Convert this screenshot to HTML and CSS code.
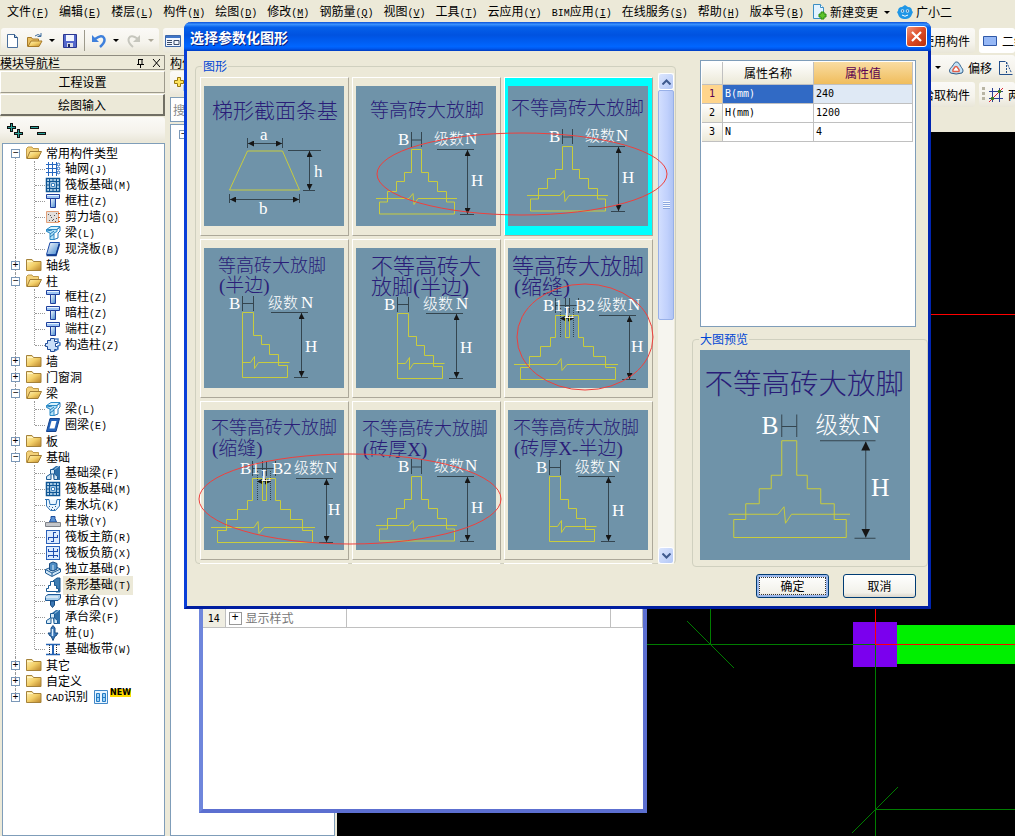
FILE: index.html
```html
<!DOCTYPE html>
<html lang="zh-CN">
<head>
<meta charset="utf-8">
<title>选择参数化图形</title>
<link rel="stylesheet" href="styles.css">
</head>
<body>
<svg class="defs" aria-hidden="true">
  <defs>
    <linearGradient id="gold" x1="0" y1="0" x2="1" y2="1"><stop offset="0" stop-color="#fff3b8"/><stop offset=".5" stop-color="#f3cf68"/><stop offset="1" stop-color="#b9832a"/></linearGradient>
    <linearGradient id="steel" x1="0" y1="0" x2="1" y2="1"><stop offset="0" stop-color="#fff"/><stop offset="1" stop-color="#3f86cf"/></linearGradient>
    <marker id="arr" viewBox="0 0 6 6" refX="6" refY="3" markerWidth="6" markerHeight="6" markerUnits="userSpaceOnUse" orient="auto-start-reverse"><path d="M0 0L6 3L0 6z" fill="#161616"/></marker>

    <symbol id="i-open" viewBox="0 0 16 16"><path d="M.5 13.500V3.500L2 2h4l1 1.500h5.500v3" fill="#f4d27a" stroke="#c09a4a"/><path d="M1 13.500L4 6.500h11.500L12 13.500z" fill="url(#gold)" stroke="#a07c34"/></symbol>
    <symbol id="i-folder" viewBox="0 0 16 16"><path d="M.5 13.500V2.500h5.500l1.500 2h7.500v9z" fill="url(#gold)" stroke="#a5823a"/><path d="M1 4.500h6" stroke="#fff4c4"/></symbol>
    <symbol id="i-grid" viewBox="0 0 16 16"><path d="M3.500 1v14M7.500 1v14M11.500 1v14M1 3.500h11M1 7.500h11M1 11.500h11" stroke="#2868c0"/><g fill="#fff" stroke="#2d6cbc"><circle cx="13.500" cy="3.500" r="1.300"/><circle cx="13.500" cy="7.500" r="1.300"/><circle cx="13.500" cy="11.500" r="1.300"/></g></symbol>
    <symbol id="i-raft" viewBox="0 0 16 16"><path d="M1 1h14v14H1z" fill="#d6ecfa"/><path d="M1.500 1.500h13v13h-13zM4.500 4.500h7v7h-7z" fill="none" stroke="#0f5594" stroke-width="1.500"/><path d="M4.500 1v3M8 1v3M11.500 1v3M4.500 12v3M8 12v3M11.500 12v3M1 4.500h3M1 8h3M1 11.500h3M12 4.500h3M12 8h3M12 11.500h3" stroke="#0f5594"/><path d="M6.500 6.500h3v3h-3z" fill="#fff" stroke="#3b7fbc"/></symbol>
    <symbol id="i-col" viewBox="0 0 16 16"><path d="M1.500 1.500h13v4h-13z" fill="#9cc4f4" stroke="#1e3f9c"/><path d="M2 2.500h12" stroke="#e8f3ff"/><path d="M5.500 5.500h5v9h-5z" fill="url(#steel)" stroke="#1e3f9c"/></symbol>
    <symbol id="i-wall" viewBox="0 0 16 16"><path d="M1.500 2.500h12v11h-12z" fill="#e3dfdb" stroke="#e2a078"/><path d="M3 5.500h1M6 8.500h1M9 6.500h1M11 9.500h1M4 11.500h1M7 11.500h1M10 12.500h1M5 6.500h1M8 10.500h1M11 4.500h1" stroke="#555"/><path d="M13 4.500h2M13 8.500h2M13 12.500h2" stroke="#d55a14"/></symbol>
    <symbol id="i-beam" viewBox="0 0 16 16"><path d="M1.500 4.500L6 1.500h9l-3 3z" fill="#d9f2fc" stroke="#2b8cc8"/><path d="M1.500 4.500h10.500v2L9 8v6.500H5V8L1.500 6.500z" fill="#b4e2f7" stroke="#2b8cc8"/><path d="M12 4.500L15 2v4l-2 2v5l-4 1.500M2 6l5-1M5 9l4-3M5 12l4-3" fill="none" stroke="#2479b8"/></symbol>
    <symbol id="i-slab" viewBox="0 0 16 16"><path d="M5 1.500h9.500L11 13.500H1.500z" fill="url(#steel)" stroke="#1d4ba8"/><path d="M1.500 14.500H11L14.500 3" fill="none" stroke="#123c8c" stroke-width="1.500"/></symbol>
    <symbol id="i-ring" viewBox="0 0 16 16"><path d="M5 1.500h9.500L11 14.500H1.500z" fill="#2464bc" stroke="#15438d"/><path d="M6.500 4h5L9.500 11.500H4.500z" fill="#fff"/></symbol>
    <symbol id="i-ctor" viewBox="0 0 16 16"><path d="M5.500 1.500h4v3h3v2h-2v3h2v3h-3v2h-4v-2h-3v-3h-2v-3h2v-3h3z" fill="#c9dff9" stroke="#1f4b98"/><path d="M10 2h3v3l2 1v2l-2 1v3l-3 2" fill="none" stroke="#4a80c6" stroke-width="1.500"/></symbol>
    <symbol id="i-fbeam" viewBox="0 0 16 16"><path d="M7 4l4-3h4v14H9z" fill="#2d6fa9"/><path d="M1.500 14.500v-3L5.500 9V4.500h4V9l3 2.500v3H9V9H6v5.500z" fill="#d5eaf8" stroke="#1b5a94"/><path d="M9.500 4.500L14 1" stroke="#9cc6e6"/></symbol>
    <symbol id="i-strip" viewBox="0 0 16 16"><path d="M8 4l4-3h3v14h-4z" fill="#3e7db2" stroke="#17558c"/><path d="M1.500 14.500v-3h2v-3h2v-4h4v4h2v3h2v3z" fill="#fff" stroke="#1b5a94"/></symbol>
    <symbol id="i-pit" viewBox="0 0 16 16"><path d="M0 2.500h4l1 5h6l1-5h4M1.500 3v6l4 4.500h5l4-4.500V3" fill="#eaf6ff" stroke="#2d72b4"/><path d="M4 9.500h1M7 10.500h1M10 9.500h1M6 12.500h1M9 12.500h1" stroke="#2b5a90"/></symbol>
    <symbol id="i-pier" viewBox="0 0 16 16"><path d="M4.500 9L6 5.500V3.500h4v2L11.500 9z" fill="#5d93d4" stroke="#1d4f9e"/><path d="M.5 9.500h15v4H.5z" fill="#c4c6ca" stroke="#7d8188"/></symbol>
    <symbol id="i-rebar" viewBox="0 0 16 16"><rect x="1.500" y="1.500" width="13" height="13" fill="#dcebff" stroke="#2c62ba"/><path d="M8.500 3.500v9M3.500 8.500h9M3.500 8v3M12.500 9V6M8 3.500h3M6 12.500h3" fill="none" stroke="#1c4db0"/></symbol>
    <symbol id="i-rebar2" viewBox="0 0 16 16"><rect x="1.500" y="1.500" width="13" height="13" fill="#dcebff" stroke="#2c62ba"/><path d="M8.500 3v10M3 6.500h10M3 10.500h10M3.500 4v2M12.500 4v2M3.500 12v-2M12.500 12v-2" stroke="#1c4db0"/></symbol>
    <symbol id="i-found" viewBox="0 0 16 16"><path d="M.5 8.500L9 5l6.500 3v3L7 15.500.5 12z" fill="#cfe6f6" stroke="#1e5a94"/><path d="M.5 8.500L7 12l8.500-4M7 12v3" fill="none" stroke="#1e5a94"/><path d="M4.500 9V2.500L8 1l4 1.500V8L8 10z" fill="#4f8dc4" stroke="#174a80"/><path d="M8 4v5" stroke="#d8ecfa"/></symbol>
    <symbol id="i-cap" viewBox="0 0 16 16"><path d="M.5 3.500L3 1.500h12.500v3.500L13 7.500H.5z" fill="#a7cdea" stroke="#1d5896"/><path d="M.5 4h12.500" stroke="#fff"/><path d="M5.500 8h4v4l-2 2.500-2-2.500z" fill="#3a77b4" stroke="#174a80"/></symbol>
    <symbol id="i-pile" viewBox="0 0 16 16"><path d="M8 .5L10 3v5h3L11 11h-1l-2 4.500L6 11H5L3 8h3V3z" fill="#3c78b8" stroke="#174a80"/><path d="M7.500 4v7" stroke="#dcefff" stroke-width="1.500"/></symbol>
    <symbol id="i-band" viewBox="0 0 16 16"><path d="M1 3.500h14M1 13.500h14" stroke="#2463b4" stroke-width="1.500"/><path d="M4.500 4v9M11.500 4v9" stroke="#333" stroke-dasharray="1 1"/><path d="M8 4v9" stroke="#2463b4" stroke-width="2"/></symbol>
    <symbol id="i-cad" viewBox="0 0 16 16"><path d="M1.500 1.500h13v13h-13z" fill="#e9f5ff" stroke="#4288c8"/><path d="M3.500 4.500h3v8h-3zM9.500 4.500h3v8h-3zM3 8.500h4M9 8.500h4" fill="#9dd1f7" stroke="#247bc4"/></symbol>

    <g id="pyramid">
      <path class="ink" d="M55.500 46v15M65.500 46v15M55.500 54h10M81 63.500h37M104 128.500h14"/>
      <path class="ink" d="M111.500 64v64" marker-start="url(#arr)" marker-end="url(#arr)"/>
      <path class="gold" d="M55.500 63.500h10v23h7v9h9v10h9v10.500h8v12h-75v-12h8v-10.500h9v-10h8v-9h7zM20 112.500h33l4-5 1 11 4-6h39"/>
      <text class="wh" x="42" y="59">B</text><text class="wh cn" x="78" y="58">级数</text><text class="wh" x="109" y="58">N</text><text class="wh" x="115" y="100">H</text>
    </g>
    <g id="half">
      <path class="ink" d="M38.500 48v15M49.500 48v15M38.500 55.500h11M67 64.500h37M90 129.500h14"/>
      <path class="ink" d="M97.500 65v64" marker-start="url(#arr)" marker-end="url(#arr)"/>
      <path class="gold" d="M38.500 64.500h11v23h8v9h8v10h9v11h9v12h-45zM38.500 114.500h8l4-6v12l4-6h31"/>
      <text class="wh" x="25" y="61">B</text><text class="wh cn" x="64" y="60">级数</text><text class="wh" x="97" y="60">N</text><text class="wh" x="101" y="104">H</text>
    </g>
    <g id="seam">
      <path class="ink" d="M47.500 50v15M57.500 50v15M61.500 50v15M70.500 50v15M47.500 57.500h23M91 67.500h37M114 131.500h14"/>
      <path class="ink" d="M121.500 68v63" marker-start="url(#arr)" marker-end="url(#arr)"/>
      <path class="ink" d="M52.500 60v30M65.500 60v30" stroke-dasharray="1 1"/>
      <path class="ink" d="M52 70.500h14" marker-start="url(#arr)" marker-end="url(#arr)"/>
      <path class="gold" d="M47.500 67.500h10v22h4v-22h9v22h5v9h10v10h12v11h10v12h-95v-12h9v-11h11v-10h10v-9h5zM6 116.500h43l4-6 1 12 5-6h51"/>
      <text class="wh" x="35" y="63">B1</text><text class="wh" x="56" y="70">L</text><text class="wh" x="67" y="63">B2</text><text class="wh cn" x="89" y="62">级数</text><text class="wh" x="120" y="62">N</text><text class="wh" x="123" y="104">H</text>
    </g>
    <symbol id="uneven" viewBox="0 0 140 140">
      <text class="nm s19" x="3" y="29">不等高砖大放脚</text><use href="#pyramid" x="-1" y="-3"/>
    </symbol>
  </defs>
</svg>

<div class="app">
  <nav class="menubar">
    <a href="#">文件<span class="k">(<u>F</u>)</span></a><a href="#">编辑<span class="k">(<u>E</u>)</span></a><a href="#">楼层<span class="k">(<u>L</u>)</span></a><a href="#">构件<span class="k">(<u>N</u>)</span></a><a href="#">绘图<span class="k">(<u>D</u>)</span></a><a href="#">修改<span class="k">(<u>M</u>)</span></a><a href="#">钢筋量<span class="k">(<u>Q</u>)</span></a><a href="#">视图<span class="k">(<u>V</u>)</span></a><a href="#">工具<span class="k">(<u>T</u>)</span></a><a href="#">云应用<span class="k">(<u>Y</u>)</span></a><a href="#"><span class="k">BIM</span>应用<span class="k">(<u>I</u>)</span></a><a href="#">在线服务<span class="k">(<u>S</u>)</span></a><a href="#">帮助<span class="k">(<u>H</u>)</span></a><a href="#">版本号<span class="k">(<u>B</u>)</span></a>
    <a href="#" class="with-icon change"><svg class="i16" viewBox="0 0 16 16"><path d="M2.500.5h7l3 3v11h-10z" fill="#e3f3ff" stroke="#3b8ec4"/><path d="M9.500.5v3h3" fill="#fff" stroke="#3b8ec4"/><path d="M8 10h2V8h3v2h2v3h-2v2h-3v-2H8z" fill="#5fc32a" stroke="#2d8a10"/></svg>新建变更<i class="caret"></i></a>
    <a href="#" class="with-icon"><svg class="i16" viewBox="0 0 16 16"><path d="M8 1l3 2c3 0 4 2 4 4l1 1-1 2c-1 4-4 5-7 5s-6-1-7-5L0 8l1-1c0-2 1-4 4-4z" fill="#1f96e6"/><circle cx="5.500" cy="7" r="1.800" fill="#bfe8ff"/><circle cx="10.500" cy="7" r="1.800" fill="#bfe8ff"/><circle cx="5.500" cy="7" r=".8" fill="#0b3d77"/><circle cx="10.500" cy="7" r=".8" fill="#0b3d77"/><path d="M5 11q3 2.500 6 0" fill="none" stroke="#fff"/></svg>广小二</a>
  </nav>

  <div class="toolrow main-tools">
    <div class="strip files">
      <button aria-label="新建"><svg class="i16" viewBox="0 0 16 16"><path d="M2.500 1.500h7l3 3v10h-10z" fill="#fff" stroke="#4a6f9c"/><path d="M9.500 1.500v3h3" fill="#b4d2f0" stroke="#274c7c"/></svg></button>
      <button aria-label="打开"><svg class="i16" viewBox="0 0 16 16"><path d="M.5 13.500V4.500h4l1 1.500h6v2" fill="#e9bf60" stroke="#a77a28"/><path d="M1 13.500L4 8h11l-3 5.500z" fill="url(#gold)" stroke="#a77a28"/><path d="M8 3q3-3 6 0M14 0v3.500h-3.500" fill="none" stroke="#3e6c9e"/></svg></button><i class="caret"></i>
      <button aria-label="保存"><svg class="i16" viewBox="0 0 16 16"><path d="M1.500 1.500h13v13h-13z" fill="#5468cc" stroke="#2a3690"/><path d="M4 2h8v6H4z" fill="#f1f5ff"/><path d="M5 10h6v4H5z" fill="#dadce8"/><path d="M6 11h2v3H6z" fill="#222c60"/></svg></button>
      <span class="sep"></span>
      <button aria-label="撤销"><svg class="i16" viewBox="0 0 16 16"><path d="M4 6q7-5 9-1t-4 9" fill="none" stroke="#3f80dc" stroke-width="2.500"/><path d="M1 2v7h7z" fill="#3f80dc"/></svg></button><i class="caret"></i>
      <button aria-label="重做" disabled><svg class="i16" viewBox="0 0 16 16"><path d="M12 6q-7-5-9-1t4 9" fill="none" stroke="#c6c6bd" stroke-width="2"/><path d="M14 2v7H7z" fill="#c6c6bd"/></svg></button><i class="caret off"></i>
    </div>
    <div class="strip wide">
      <button aria-label="列表"><svg class="i16" viewBox="0 0 16 16"><path d="M.5 2.500h15v11H.5z" fill="#f1f6ff" stroke="#3f68a8"/><path d="M1 3h14v2H1z" fill="#3f75c8"/><path d="M2 7.500h5M2 9.500h5M2 11.500h5M9 7.500h5v4H9z" fill="none" stroke="#3a4a68"/></svg></button>
      <span>使用构件</span>
    </div>
    <div class="strip edge lit"><svg class="i16" viewBox="0 0 16 16"><path d="M1.500 3.500h13v9h-13z" fill="#96b8f6" stroke="#2f58a8"/></svg><span>二维</span></div>
  </div>

  <div class="workspace">
    <aside class="navigator">
      <header class="caption"><span>模块导航栏</span><svg class="pin" viewBox="0 0 24 10"><path d="M2.500 1v5M6 1v5M2 1.500h5M1 6.500h7M4.500 7v3" fill="none" stroke="#000"/><path d="M17 1l7 8M24 1l-7 8" stroke="#000"/></svg></header>
      <button class="bigbtn">工程设置</button>
      <button class="bigbtn sunk">绘图输入</button>
      <div class="strip expanders"><svg viewBox="0 0 42 16"><path d="M4.500 0v9M0 4.500h9M11.500 6v9M7 10.500h9" stroke="#111" stroke-width="3"/><path d="M4.500 1v7M1 4.500h7M11.500 7v7M8 10.500h7" stroke="#2aa198"/><path d="M23 4.500h9M30 10.500h9" stroke="#111" stroke-width="3"/><path d="M24 4.500h7M31 10.500h7" stroke="#2aa198"/></svg></div>
      <ul class="tree">
        <li><div class="row"><b class="ex">−</b><svg class="i16"><use href="#i-open"/></svg>常用构件类型</div>
          <ul>
            <li><svg class="i16"><use href="#i-grid"/></svg><span>轴网<span class="k">(J)</span></span></li>
            <li><svg class="i16"><use href="#i-raft"/></svg><span>筏板基础<span class="k">(M)</span></span></li>
            <li><svg class="i16"><use href="#i-col"/></svg><span>框柱<span class="k">(Z)</span></span></li>
            <li><svg class="i16"><use href="#i-wall"/></svg><span>剪力墙<span class="k">(Q)</span></span></li>
            <li><svg class="i16"><use href="#i-beam"/></svg><span>梁<span class="k">(L)</span></span></li>
            <li><svg class="i16"><use href="#i-slab"/></svg><span>现浇板<span class="k">(B)</span></span></li>
          </ul></li>
        <li><div class="row"><b class="ex">+</b><svg class="i16"><use href="#i-folder"/></svg>轴线</div></li>
        <li><div class="row"><b class="ex">−</b><svg class="i16"><use href="#i-open"/></svg>柱</div>
          <ul>
            <li><svg class="i16"><use href="#i-col"/></svg><span>框柱<span class="k">(Z)</span></span></li>
            <li><svg class="i16"><use href="#i-col"/></svg><span>暗柱<span class="k">(Z)</span></span></li>
            <li><svg class="i16"><use href="#i-col"/></svg><span>端柱<span class="k">(Z)</span></span></li>
            <li><svg class="i16"><use href="#i-ctor"/></svg><span>构造柱<span class="k">(Z)</span></span></li>
          </ul></li>
        <li><div class="row"><b class="ex">+</b><svg class="i16"><use href="#i-folder"/></svg>墙</div></li>
        <li><div class="row"><b class="ex">+</b><svg class="i16"><use href="#i-folder"/></svg>门窗洞</div></li>
        <li><div class="row"><b class="ex">−</b><svg class="i16"><use href="#i-open"/></svg>梁</div>
          <ul>
            <li><svg class="i16"><use href="#i-beam"/></svg><span>梁<span class="k">(L)</span></span></li>
            <li><svg class="i16"><use href="#i-ring"/></svg><span>圈梁<span class="k">(E)</span></span></li>
          </ul></li>
        <li><div class="row"><b class="ex">+</b><svg class="i16"><use href="#i-folder"/></svg>板</div></li>
        <li><div class="row"><b class="ex">−</b><svg class="i16"><use href="#i-open"/></svg>基础</div>
          <ul>
            <li><svg class="i16"><use href="#i-fbeam"/></svg><span>基础梁<span class="k">(F)</span></span></li>
            <li><svg class="i16"><use href="#i-raft"/></svg><span>筏板基础<span class="k">(M)</span></span></li>
            <li><svg class="i16"><use href="#i-pit"/></svg><span>集水坑<span class="k">(K)</span></span></li>
            <li><svg class="i16"><use href="#i-pier"/></svg><span>柱墩<span class="k">(Y)</span></span></li>
            <li><svg class="i16"><use href="#i-rebar"/></svg><span>筏板主筋<span class="k">(R)</span></span></li>
            <li><svg class="i16"><use href="#i-rebar2"/></svg><span>筏板负筋<span class="k">(X)</span></span></li>
            <li><svg class="i16"><use href="#i-found"/></svg><span>独立基础<span class="k">(P)</span></span></li>
            <li><svg class="i16"><use href="#i-strip"/></svg><span class="picked">条形基础<span class="k">(T)</span></span></li>
            <li><svg class="i16"><use href="#i-cap"/></svg><span>桩承台<span class="k">(V)</span></span></li>
            <li><svg class="i16"><use href="#i-fbeam"/></svg><span>承台梁<span class="k">(F)</span></span></li>
            <li><svg class="i16"><use href="#i-pile"/></svg><span>桩<span class="k">(U)</span></span></li>
            <li><svg class="i16"><use href="#i-band"/></svg><span>基础板带<span class="k">(W)</span></span></li>
          </ul></li>
        <li><div class="row"><b class="ex">+</b><svg class="i16"><use href="#i-folder"/></svg>其它</div></li>
        <li><div class="row"><b class="ex">+</b><svg class="i16"><use href="#i-folder"/></svg>自定义</div></li>
        <li><div class="row"><b class="ex">+</b><svg class="i16"><use href="#i-folder"/></svg><span><span class="k">CAD</span>识别</span><svg class="i16"><use href="#i-cad"/></svg><em class="new">NEW</em></div></li>
      </ul>
    </aside>

    <aside class="components">
      <header class="caption"><span>构件列表</span></header>
      <div class="strip addbar"><svg class="i16" viewBox="0 0 16 16"><path d="M4.500 1.500h3v3h3v3h-3v3h-3v-3h-3v-3h3z" fill="#ffe45c" stroke="#9a7a10"/><path d="M10 9h5v6h-5z" fill="#a8c8f0"/></svg></div>
      <input class="search" type="text" placeholder="搜索构件..." aria-label="搜索构件">
      <div class="complist"><b class="ex">−</b></div>
    </aside>

    <section class="stage">
      <div class="toolrow">
        <div class="strip right"><i class="caret"></i><svg class="i16" viewBox="0 0 16 16"><path d="M2.500 13c-2.500-3 .5-5 2-7s2-4 4-4 3 2 4 4 4 4 1.500 7q-6 2-11.500 0z" fill="#c4e2f6" stroke="#2c5a86"/><path d="M5 11.500c-1-2 1-2.500 1.500-4s2.500-1.500 3 0 2.500 2 1.500 4z" fill="#fff" stroke="#e0604c" stroke-width="1.500"/></svg><span>偏移</span><svg class="i16 last" viewBox="0 0 16 16"><path d="M1.500 1v13.500h13M1.500 1.500h6" fill="none" stroke="#24508c"/><path d="M8.500 2l5 11M8.500 2v11" stroke="#24508c" stroke-dasharray="2 1"/></svg></div>
      </div>
      <div class="toolrow">
        <div class="strip right pick"><span>拾取构件</span></div>
        <div class="strip edge"><i class="grip"></i><svg class="i16" viewBox="0 0 16 16"><path d="M4.500 1v14M11.500 1v14M1 4.500h14M1 11.500h14" stroke="#2c3f94"/><path d="M1 15L15 1" stroke="#d23"/><circle cx="4.500" cy="11.500" r="1.800" fill="#3c7a1c"/><circle cx="11.500" cy="4.500" r="1.800" fill="#3c7a1c"/></svg><span>两点</span></div>
      </div>
      <svg class="drawing" role="img" aria-label="绘图区">
        <rect x="516" y="490" width="44" height="45" fill="#7b00ee"/><rect x="560" y="493" width="600" height="39" fill="#00f000"/>
        <g shape-rendering="crispEdges" fill="none"><path d="M300 512.500h238M373.500 470v42M538.500 512v200M538.500 677.500h700" stroke="#007c00"/><path d="M538.500 470v42M538 512.500h700M560 182.500h600" stroke="#f00"/></g>
        <path d="M350 489l47 47M515 701l46-46" stroke="#007c00"/>
      </svg>
    </section>
  </div>

  <section class="props" aria-label="属性编辑器">
    <table><tbody><tr><th>14</th><td class="pname"><div><b class="ex">+</b>显示样式</div></td><td></td><td class="pend"></td></tr></tbody></table>
  </section>

  <div class="dialog" role="dialog" aria-labelledby="dlg-title">
    <header class="titlebar"><h1 id="dlg-title">选择参数化图形</h1><button class="close" aria-label="关闭"><svg viewBox="0 0 19 19"><path d="M5 5l9 9M14 5l-9 9" stroke="#fff" stroke-width="2.200"/></svg></button></header>
    <div class="dlg-body">
      <fieldset class="shapes">
        <legend>图形</legend>
        <div class="scroller">
          <div class="cards">
            <button class="card"><svg viewBox="0 0 140 140"><text class="nm s21" x="8" y="32">梯形截面条基</text><path class="gold" d="M43.500 65h35l17 39h-70z"/><path class="ink" d="M43.500 52v10M78.500 52v10M25.500 108v9M95.500 108v9M84 64.500h33M99 104.500h12"/><path class="ink" d="M44 57.500h34" marker-start="url(#arr)" marker-end="url(#arr)"/><path class="ink" d="M26 113.500h69" marker-start="url(#arr)" marker-end="url(#arr)"/><path class="ink" d="M105.500 65v39" marker-start="url(#arr)" marker-end="url(#arr)"/><text class="wh" x="56" y="54">a</text><text class="wh" x="110" y="91">h</text><text class="wh" x="55" y="128">b</text></svg></button>
            <button class="card"><svg viewBox="0 0 140 140"><text class="nm s19" x="14" y="31">等高砖大放脚</text><use href="#pyramid"/></svg></button>
            <button class="card on"><svg viewBox="0 0 140 140"><use href="#uneven"/></svg></button>
            <button class="card"><svg viewBox="0 0 140 140"><text class="nm s18" x="14" y="24">等高砖大放脚</text><text class="nm s19" x="15" y="44">(半边)</text><use href="#half"/></svg></button>
            <button class="card"><svg viewBox="0 0 140 140"><text class="nm s22" x="15" y="26">不等高砖大</text><text class="nm s21" x="15" y="46">放脚(半边)</text><use href="#half" x="3" y="1"/></svg></button>
            <button class="card"><svg viewBox="0 0 140 140"><text class="nm s22" x="4" y="26">等高砖大放脚</text><text class="nm s21" x="6" y="46">(缩缝)</text><use href="#seam"/></svg></button>
            <button class="card"><svg viewBox="0 0 140 140"><text class="nm s18" x="7" y="24">不等高砖大放脚</text><text class="nm s19" x="8" y="45">(缩缝)</text><use href="#seam" x="1" y="1"/></svg></button>
            <button class="card"><svg viewBox="0 0 140 140"><text class="nm s18" x="6" y="25">不等高砖大放脚</text><text class="nm s19" x="7" y="46">(砖厚X)</text><use href="#pyramid" y="3"/></svg></button>
            <button class="card"><svg viewBox="0 0 140 140"><text class="nm s18" x="5" y="24">不等高砖大放脚</text><text class="nm s19" x="6" y="45">(砖厚X-半边)</text><use href="#half" x="3" y="2"/></svg></button>
            <button class="card" aria-label="更多"></button><button class="card" aria-label="更多"></button><button class="card" aria-label="更多"></button>
          </div>
          <div class="sbar"><button class="sb" aria-label="向上"><svg viewBox="0 0 9 6"><path d="M.5 5.500l4-4 4 4"/></svg></button><div class="track"><div class="thumb"><i></i></div></div><button class="sb" aria-label="向下"><svg viewBox="0 0 9 6"><path d="M.5.5l4 4 4-4"/></svg></button></div>
        </div>
      </fieldset>
      <div class="side">
        <div class="gridbox">
          <table class="grid">
            <thead><tr><th class="no"></th><th class="name">属性名称</th><th class="val">属性值</th></tr></thead>
            <tbody>
              <tr class="cur"><th>1</th><td>B(mm)</td><td>240</td></tr>
              <tr><th>2</th><td>H(mm)</td><td>1200</td></tr>
              <tr><th>3</th><td>N</td><td>4</td></tr>
            </tbody>
          </table>
        </div>
        <fieldset class="preview">
          <legend>大图预览</legend>
          <svg viewBox="0 0 140 140"><use href="#uneven"/></svg>
        </fieldset>
      </div>
    </div>
    <footer class="dlg-foot"><button class="xp ok">确定</button><button class="xp">取消</button></footer>
    <svg class="marks" aria-hidden="true"><ellipse cx="338" cy="152" rx="145" ry="41"/><ellipse cx="401" cy="315" rx="68" ry="53"/><ellipse cx="166" cy="477" rx="151" ry="45"/></svg>
  </div>
</div>
</body>
</html>
```
FILE: styles.css
```css
* { box-sizing: border-box; }
body {
  margin: 0;
  background: #ece9d8;
  color: #000;
  font: 12px/16px "Noto Sans CJK SC", sans-serif;
}
button, input { font: inherit; color: inherit; }
button { padding: 0; border: 0; background: none; }
ul { list-style: none; margin: 0; padding: 0; }
.defs { position: absolute; width: 0; height: 0; }
.app {
  position: relative;
  display: flex;
  flex-direction: column;
  height: 100vh;
  min-height: 836px;
  overflow: hidden;
}
.k { font-family: "Liberation Mono", monospace; font-size: 10px; }
.i16 { width: 16px; height: 16px; flex: none; display: block; }
.caret {
  border: 3px solid transparent;
  border-top-color: #000;
  border-bottom: 0;
  flex: none;
}
.caret.off { border-top-color: #aca899; }

/* menu */
.menubar { display: flex; gap: 10px; height: 24px; padding-left: 7px; align-items: center; white-space: nowrap; }
.menubar a { color: #000; text-decoration: none; flex: none; }
.menubar .with-icon { display: flex; align-items: center; gap: 3px; }
.menubar .caret { margin-left: 3px; }
.menubar .change { margin-left: -3px; }
.menubar .change + .with-icon { margin-left: -3px; }

/* tool strips */
.toolrow { display: flex; gap: 4px; height: 27px; padding-bottom: 2px; flex: none; }
.strip {
  display: flex;
  align-items: center;
  border-radius: 3px;
  background: linear-gradient(#fbfaf7, #f5f3ec 60%, #e9e6d8);
  white-space: nowrap;
  overflow: hidden;
}
.main-tools { height: 31px; padding: 4px 0 2px 1px; }
.files { width: 158px; flex: none; gap: 6px; padding-left: 4px; }
.files button + .caret { margin-right: 1px; }
.sep { width: 1px; height: 21px; background: #9d9a8c; }
.wide { flex: 1; justify-content: space-between; padding: 0 5px 0 2px; }
.edge { width: 36px; flex: none; gap: 4px; padding-left: 3px; }
.edge.lit { background: #fff; }
.edge .grip { margin-right: -1px; }
.grip { width: 3px; height: 15px; flex: none; background: repeating-linear-gradient(#b9b5a4 0 3px, transparent 3px 5px); }
.right { flex: 1; justify-content: flex-end; gap: 4px; padding-right: 1px; }
.right .caret { margin-right: 3px; }
.right .last { margin-left: 2px; }
.pick { padding-right: 5px; }

.workspace { display: flex; flex: 1; min-height: 0; }
.navigator { width: 165px; flex: none; display: flex; flex-direction: column; }
.caption {
  display: flex;
  justify-content: space-between;
  align-items: center;
  height: 15px;
  margin-bottom: 1px;
  border: 1px solid #8f8c80;
  border-left: 0;
  line-height: 13px;
  white-space: nowrap;
  flex: none;
}
.pin { width: 24px; height: 10px; margin-right: 4px; }
.bigbtn {
  height: 22px;
  margin-bottom: 1px;
  border: 1px solid #fff;
  border-right-color: #9d9a8c;
  border-bottom-color: #9d9a8c;
  flex: none;
}
.bigbtn.sunk { border-bottom: 2px solid #716f64; border-right: 2px solid #716f64; }
.expanders { height: 25px; margin-bottom: 1px; padding: 2px 0 0 7px; flex: none; }
.expanders svg { width: 42px; height: 16px; }
.tree {
  flex: 1;
  min-height: 0;
  margin: 0 0 0 2px;
  padding-top: 1px;
  border: 1px solid #7f9db9;
  background: #fff;
  overflow: hidden;
}
.tree li { position: relative; }
.tree > li::before {
  content: "";
  position: absolute;
  left: 12px;
  top: 0;
  bottom: 0;
  border-left: 1px dotted #999;
}
.tree > li:first-child::before { top: 8px; }
.tree > li:last-child::before { bottom: 8px; }
.row { display: flex; align-items: center; gap: 5px; height: 16px; padding-left: 8px; white-space: nowrap; }
.row .i16 { margin-right: -1px; }
.row .ex + .i16 { margin-left: 1px; }
.ex {
  position: relative;
  width: 9px;
  height: 9px;
  flex: none;
  border: 1px solid #7b98b8;
  background: #fff;
  font: 10px/7px "Liberation Mono", monospace;
  text-align: center;
  overflow: hidden;
}
.tree ul { position: relative; }
.tree ul::before {
  content: "";
  position: absolute;
  left: 31px;
  top: 0;
  bottom: 8px;
  border-left: 1px dotted #999;
}
.tree ul li { display: flex; align-items: center; height: 16px; padding-left: 32px; white-space: nowrap; }
.tree ul li::before { content: ""; width: 10px; border-top: 1px dotted #999; }
.tree ul li > span { margin-left: 2px; padding: 0 2px; }
.picked { background: #ece9d8; }
.new { align-self: flex-start; margin-left: -3px; background: #fd0; font: 8px/8px "DejaVu Sans", sans-serif; font-weight: bold; }

.components { width: 165px; margin: 0 2px 0 5px; flex: none; display: flex; flex-direction: column; }
.addbar { height: 25px; margin-bottom: 1px; padding-left: 3px; flex: none; }
.search { width: 100%; height: 25px; margin-bottom: 2px; padding: 0 2px; border: 1px solid #7f9db9; border-radius: 0; background: #fff; flex: none; }
.search::placeholder { color: #888; opacity: 1; }
.complist { flex: 1; padding: 5px 8px; border: 1px solid #7f9db9; background: #fff; }
.complist .ex { display: block; }

.stage { flex: 1; min-width: 0; display: flex; flex-direction: column; }
.drawing { display: block; width: 100%; flex: 1; margin-top: 23px; background: #000; }

/* property window behind the dialog */
.props {
  position: absolute;
  left: 199px;
  top: 560px;
  width: 448px;
  height: 253px;
  padding-top: 44px;
  border: 4px solid #6f86dc;
  border-right-color: #5c6fd0;
  border-bottom-color: #5c6fd0;
  background: #fff;
}
.props table { width: 100%; border-collapse: collapse; color: #777; }
.props th, .props td { height: 19px; padding: 0; border: 1px solid #c0c0c0; border-left: 0; }
.props th { width: 22px; background: #f0eee2; color: #000; font: 10px "DejaVu Sans Mono", monospace; }
.props .pname { width: 121px; }
.props .pname div { display: flex; align-items: center; gap: 4px; padding-left: 3px; }
.props .pname .ex { width: 13px; height: 13px; border-color: #999; line-height: 11px; font-size: 12px; color: #000; }
.props .pend { width: 32px; }

/* dialog */
.dialog {
  position: absolute;
  left: 184px;
  top: 22px;
  width: 747px;
  height: 587px;
  display: flex;
  flex-direction: column;
  border: 3px solid #0a3fd8;
  border-top: 0;
  border-right-color: #0024b0;
  border-bottom-color: #001ea0;
  border-radius: 7px 7px 0 0;
  background: #ece9d8;
}
.titlebar {
  display: flex;
  align-items: center;
  justify-content: space-between;
  height: 29px;
  margin: 0 -3px;
  padding: 0 4px 0 6px;
  border-radius: 7px 7px 0 0;
  background: linear-gradient(#0a50d8, #3a92ff 8%, #0560ea 18%, #0052e0 45%, #0066ff 85%, #0058ee 92%, #003cc0);
  flex: none;
}
.titlebar h1 { margin: 0; color: #fff; font-size: 14px; line-height: 20px; text-shadow: 1px 1px #0a1f80; }
.close { width: 21px; height: 21px; border: 1px solid #fff; border-radius: 3px; background: linear-gradient(135deg, #f0957a, #dd4a24 50%, #b8300c); }
.close svg { display: block; width: 19px; height: 19px; }
.dlg-body { display: flex; flex: 1; min-height: 0; gap: 16px; padding: 8px 0 0 8px; }
fieldset { min-width: 0; margin: 0; padding: 0; border: 1px solid #d0d0bf; border-radius: 4px; }
legend { margin-left: 6px; padding: 0 1px; color: #0046d5; line-height: 14px; }
.shapes { width: 481px; flex: none; }
.scroller { display: flex; height: 491px; padding-left: 4px; gap: 5px; }
.cards { display: grid; grid-template-columns: repeat(3, 149px); grid-auto-rows: 159px; gap: 3px; padding-top: 4px; overflow: hidden; }
.card {
  display: flex;
  padding: 8px 3px;
  border: 1px solid #fff;
  border-right-color: #aca899;
  border-bottom-color: #aca899;
}
.card.on { background: #0ff; }
.card svg { width: 140px; height: 140px; flex: none; background: #6f93a9; }
.ink { fill: none; stroke: #34454f; vector-effect: non-scaling-stroke; }
.gold { fill: none; stroke: #c8cc3e; vector-effect: non-scaling-stroke; }
.nm { fill: #2a1d78; font-family: "Liberation Serif", "Noto Sans CJK SC", serif; font-weight: 300; }
.s18 { font-size: 18px; }
.s19 { font-size: 19px; }
.s21 { font-size: 21px; }
.s22 { font-size: 22px; }
.wh { fill: #fff; font: 17px "Liberation Serif", serif; }
.wh.cn { font: 300 15px "Noto Sans CJK SC", sans-serif; }

.sbar { display: flex; flex-direction: column; width: 16px; background: #f6f5ef; }
.sb { width: 16px; height: 17px; flex: none; border: 1px solid #fff; border-radius: 3px; background: linear-gradient(135deg, #dce6fe, #b4c8f6); }
.sb svg { display: block; width: 9px; height: 6px; margin: auto; fill: none; stroke: #3f5a8e; stroke-width: 2; }
.track { flex: 1; }
.thumb { display: flex; align-items: center; justify-content: center; height: 230px; border: 1px solid #98b0e8; border-radius: 2px; background: linear-gradient(90deg, #d2defe, #c0d0fc 60%, #b0c4f4); }
.thumb i { width: 7px; height: 8px; background: repeating-linear-gradient(#f4f8ff 0 1px, #8ca8e0 1px 2px); }

.side { flex: 1; display: flex; flex-direction: column; }
.gridbox { width: 216px; height: 267px; margin: 1px 0 5px 8px; padding: 1px; border: 1px solid #7f9db9; background: #fff; flex: none; }
.grid { border-collapse: separate; border-spacing: 0; table-layout: fixed; width: 211px; }
.grid th, .grid td { height: 19px; padding: 0 0 0 2px; border: solid #c0c0c0; border-width: 0 1px 1px 0; font-weight: 400; text-align: left; }
.grid td { font: 10px/16px "DejaVu Sans Mono", monospace; }
.grid th { padding: 0; background: linear-gradient(#fff, #ece9d8); text-align: center; }
.grid thead th { height: 23px; }
.grid tbody th { font: 10px/16px "DejaVu Sans Mono", monospace; }
.grid .no { width: 21px; }
.grid .name { width: 91px; }
.grid .val { background: linear-gradient(#f9dca2, #f0bd5c); color: #5a0050; }
.grid .cur th { background: #ffd58c; color: #5a0050; }
.grid .cur td { background: #dfe9f5; }
.grid .cur th + td { background: #316ac5; color: #fff; }
.preview svg { display: block; width: 210px; height: 210px; margin: 4px 0 6px 7px; background: #6f93a9; }
.preview .gold { stroke: #e0e020; }

.dlg-foot { display: flex; justify-content: flex-end; gap: 14px; padding: 10px 12px 8px; }
.xp {
  width: 73px;
  height: 24px;
  border: 1px solid #003c74;
  border-radius: 3px;
  background: linear-gradient(#fff, #f2f1ea 80%, #dcd7cb);
}
.xp.ok { box-shadow: inset 0 0 0 2px #9cb8ec; outline: 1px dotted #333; outline-offset: -4px; }
.marks { position: absolute; left: 0; top: 0; width: 100%; height: 100%; overflow: visible; margin-left: -3px; pointer-events: none; fill: none; stroke: #f0403c; }
```
